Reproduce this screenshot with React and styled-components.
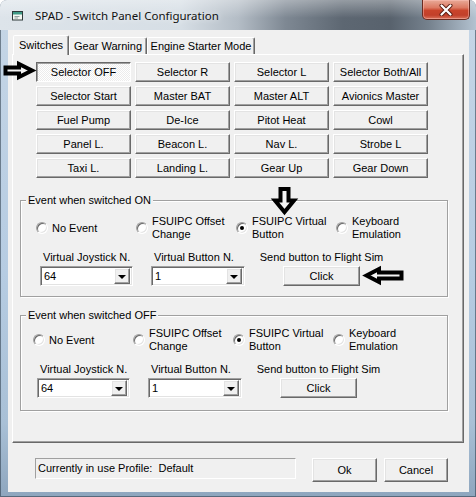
import React from "react";
import styled, { createGlobalStyle, css } from "styled-components";

const Global = createGlobalStyle`
  * { box-sizing: border-box; }
  body { margin: 0; background: #fff; font-family: "Liberation Sans", Arial, sans-serif; font-size: 11px; color: #000; }
`;

const raised = css`
  background: #f0f0f0;
  border: 1px solid;
  border-color: #fff #696969 #696969 #fff;
  box-shadow: inset -1px -1px 0 #a0a0a0, inset 1px 1px 0 #e3e3e3;
`;

const sunken = css`
  border: 1px solid;
  border-color: #a0a0a0 #fff #fff #a0a0a0;
  box-shadow: inset 1px 1px 0 #696969, inset -1px -1px 0 #e3e3e3;
`;

const Window = styled.div`
  position: relative;
  width: 476px;
  height: 497px;
  display: flex;
  flex-direction: column;
  overflow: hidden;
  border-radius: 7px 7px 0 0;
  background: linear-gradient(180deg, #c6d6e6 0%, #b6cce2 55%, #a9c0d6 85%, #8ea6be 100%);
  box-shadow: inset 0 0 0 1px rgba(40, 55, 70, 0.55);
`;

const TitleBar = styled.div`
  height: 30px;
  flex: none;
  display: flex;
  align-items: center;
  padding-left: 12px;
  gap: 12px;
  background:
    linear-gradient(180deg, rgba(255,255,255,0.35) 0%, rgba(255,255,255,0) 60%),
    linear-gradient(90deg, #dde4ea 0%, #d6dee5 38%, #b4bdc6 50%, #7e8893 60%, #5d6772 72%, #58626d 82%, #75818d 90%, #b3c2d0 100%);
`;

const TitleText = styled.span`
  font-family: "Noto Sans", "Open Sans", sans-serif;
  font-size: 11.5px;
  color: #111;
  text-shadow: 0 0 6px rgba(255, 255, 255, 0.9);
`;

const CloseButton = styled.div`
  margin-left: auto;
  margin-right: 6px;
  align-self: flex-start;
  width: 48px;
  height: 20px;
  border: 1px solid #6b2b20;
  border-top: none;
  border-radius: 0 0 5px 5px;
  background: linear-gradient(180deg, #e9aa98 0%, #dc7a63 40%, #c9442b 55%, #c2402a 80%, #d9735c 100%);
  box-shadow: inset 0 0 0 1px rgba(255, 200, 190, 0.45);
  display: flex;
  align-items: center;
  justify-content: center;
`;

const Client = styled.div`
  flex: 1;
  margin: 0 7px 5px 8px;
  background: #f0f0f0;
  padding: 5px 0 0 4px;
  display: flex;
  flex-direction: column;
`;

const TabStrip = styled.div`
  position: relative;
  z-index: 1;
  display: flex;
  align-items: flex-end;
  height: 19px;
  margin-left: 1px;
`;

const Tab = styled.div`
  width: ${(p) => p.$w}px;
  height: ${(p) => (p.$active ? 20 : 17)}px;
  margin-bottom: ${(p) => (p.$active ? -1 : 0)}px;
  padding-bottom: ${(p) => (p.$active ? 2 : 0)}px;
  background: #f0f0f0;
  border: 1px solid;
  border-bottom: none;
  border-color: #fff #696969 transparent #fff;
  box-shadow: inset -1px 0 0 #a0a0a0;
  border-radius: 2px 2px 0 0;
  display: flex;
  align-items: center;
  justify-content: center;
  white-space: nowrap;
`;

const Panel = styled.div`
  width: 452px;
  height: 389px;
  border: 1px solid;
  border-color: #fff #696969 #696969 #fff;
  box-shadow: inset -1px -1px 0 #a0a0a0;
  padding-top: 7px;
  display: flex;
  flex-direction: column;
`;

const SwitchGrid = styled.div`
  margin-left: 23px;
  display: grid;
  grid-template-columns: repeat(4, 95px);
  grid-auto-rows: 20px;
  column-gap: 4px;
  row-gap: 4px;
`;

const Button = styled.button`
  ${raised}
  width: ${(p) => (p.$w ? `${p.$w}px` : "100%")};
  height: ${(p) => p.$h || 20}px;
  padding: 0;
  margin: 0;
  font: 11px "Liberation Sans", Arial, sans-serif;
  color: #000;
  display: flex;
  align-items: center;
  justify-content: center;
  white-space: nowrap;
  ${(p) =>
    p.$pressed &&
    css`
      border-color: #696969 #fff #fff #696969;
      box-shadow: inset 1px 1px 0 #a0a0a0;
      background: repeating-conic-gradient(#ffffff 0 25%, #ececec 0 50%) 0 0 / 2px 2px;
    `}
`;

const Group = styled.div`
  position: relative;
  width: 428px;
  height: ${(p) => p.$h}px;
  margin: ${(p) => p.$mt}px 0 0 7px;
  border: 1px solid #a0a0a0;
  box-shadow: 1px 1px 0 #fff, inset 1px 1px 0 #fff;
  padding: ${(p) => p.$pt}px 0 0 ${(p) => p.$pl}px;
`;

const Legend = styled.span`
  position: absolute;
  top: -7px;
  left: 5px;
  padding: 0 2px;
  line-height: 13px;
  background: #f0f0f0;
  white-space: nowrap;
`;

const RadioRow = styled.div`
  display: grid;
  grid-template-columns: repeat(4, 100px);
  align-items: center;
  height: 26px;
`;

const RadioItem = styled.label`
  display: flex;
  align-items: center;
  gap: 4px;
  line-height: 13px;
`;

const RadioDot = styled.span`
  position: relative;
  flex: none;
  width: 12px;
  height: 12px;
  border-radius: 50%;
  background: #fff;
  border: 1px solid;
  border-color: #a0a0a0 #fff #fff #a0a0a0;
  box-shadow: inset 1px 1px 0 #696969, inset -1px -1px 0 #e3e3e3;
  ${(p) =>
    p.$checked &&
    css`
      &::after {
        content: "";
        position: absolute;
        left: 3px;
        top: 3px;
        width: 4px;
        height: 4px;
        border-radius: 50%;
        background: #000;
      }
    `}
`;

const LowerRow = styled.div`
  display: flex;
  gap: 18px;
  margin: 10px 0 0 4px;
`;

const Field = styled.div`
  display: flex;
  flex-direction: column;
  gap: 2px;
`;

const SendField = styled(Field)`
  width: 117px;
  align-items: center;
`;

const FieldLabel = styled.span`
  line-height: 13px;
  padding-left: ${(p) => (p.$center ? 0 : 3)}px;
  white-space: nowrap;
`;

const SelectBox = styled.div`
  ${sunken}
  width: ${(p) => p.$w}px;
  height: 20px;
  background: #fff;
  display: flex;
  align-items: center;
  justify-content: space-between;
  padding: 0 2px 0 3px;
`;

const DropButton = styled.span`
  ${raised}
  width: 16px;
  height: 16px;
  display: flex;
  align-items: center;
  justify-content: center;
  &::after {
    content: "";
    border-left: 4px solid transparent;
    border-right: 4px solid transparent;
    border-top: 4px solid #000;
    margin-top: 1px;
  }
`;

const BottomRow = styled.div`
  display: flex;
  align-items: flex-start;
  margin: 15px 0 0 23px;
`;

const StatusBox = styled.div`
  width: 261px;
  height: 21px;
  border: 1px solid;
  border-color: #a0a0a0 #fff #fff #a0a0a0;
  padding: 3px 0 0 2px;
  line-height: 13px;
  margin-right: 16px;
  white-space: pre;
`;

const DialogButtons = styled.div`
  display: flex;
  gap: 7px;
`;

const Overlay = styled.svg`
  position: absolute;
  left: 0;
  top: 0;
  pointer-events: none;
`;

const switches = [
  "Selector OFF", "Selector R", "Selector L", "Selector Both/All",
  "Selector Start", "Master BAT", "Master ALT", "Avionics Master",
  "Fuel Pump", "De-Ice", "Pitot Heat", "Cowl",
  "Panel L.", "Beacon L.", "Nav L.", "Strobe L",
  "Taxi L.", "Landing L.", "Gear Up", "Gear Down",
];

const radios = [
  ["No Event"],
  ["FSUIPC Offset", "Change"],
  ["FSUIPC Virtual", "Button"],
  ["Keyboard", "Emulation"],
];

function EventGroup({ title, h, mt, pt, pl }) {
  return (
    <Group $h={h} $mt={mt} $pt={pt} $pl={pl}>
      <Legend>{title}</Legend>
      <RadioRow>
        {radios.map((lines, i) => (
          <RadioItem key={i}>
            <RadioDot $checked={i === 2} />
            <span>
              {lines.map((l, j) => (
                <React.Fragment key={j}>
                  {j > 0 && <br />}
                  {l}
                </React.Fragment>
              ))}
            </span>
          </RadioItem>
        ))}
      </RadioRow>
      <LowerRow>
        <Field>
          <FieldLabel>Virtual Joystick N.</FieldLabel>
          <SelectBox $w={93}>
            <span>64</span>
            <DropButton />
          </SelectBox>
        </Field>
        <Field>
          <FieldLabel>Virtual Button N.</FieldLabel>
          <SelectBox $w={94}>
            <span>1</span>
            <DropButton />
          </SelectBox>
        </Field>
        <SendField>
          <FieldLabel $center>Send button to Flight Sim</FieldLabel>
          <Button $w={77}>Click</Button>
        </SendField>
      </LowerRow>
    </Group>
  );
}

export default function App() {
  return (
    <>
      <Global />
      <Window>
        <TitleBar>
          <svg width="11" height="11" viewBox="0 0 11 11">
            <rect x="0.5" y="1.5" width="10" height="8.5" fill="#f4f7f2" stroke="#2f3a3a" />
            <rect x="1" y="2" width="9" height="2.5" fill="#3f9a86" />
            <path d="M2.5 6.5h5M2.5 8h3.5" stroke="#7a8a8a" strokeWidth="0.8" />
          </svg>
          <TitleText>SPAD - Switch Panel Configuration</TitleText>
          <CloseButton>
            <svg width="16" height="12" viewBox="0 0 16 12">
              <path d="M3.5 1.5L12.5 10.5M12.5 1.5L3.5 10.5" stroke="#5a1d12" strokeWidth="4" strokeLinecap="round" />
              <path d="M3.5 1.5L12.5 10.5M12.5 1.5L3.5 10.5" stroke="#fff" strokeWidth="2.2" strokeLinecap="round" />
            </svg>
          </CloseButton>
        </TitleBar>
        <Client>
          <TabStrip>
            <Tab $w={56} $active>Switches</Tab>
            <Tab $w={78}>Gear Warning</Tab>
            <Tab $w={108}>Engine Starter Mode</Tab>
          </TabStrip>
          <Panel>
            <SwitchGrid>
              {switches.map((s, i) => (
                <Button key={s} $pressed={i === 0}>{s}</Button>
              ))}
            </SwitchGrid>
            <EventGroup title="Event when switched ON" h={97} mt={22} pt={14} pl={15} />
            <EventGroup title="Event when switched OFF" h={96} mt={18} pt={11} pl={12} />
          </Panel>
          <BottomRow>
            <StatusBox>Currently in use Profile:  Default</StatusBox>
            <DialogButtons>
              <Button $w={65} $h={24}>Ok</Button>
              <Button $w={64} $h={24}>Cancel</Button>
            </DialogButtons>
          </BottomRow>
        </Client>
        <Overlay width="476" height="497" viewBox="0 0 476 497">
          <g fill="#f4f4f4" stroke="#000" strokeWidth="4" strokeLinejoin="miter">
            <polygon points="5.5,67.5 19,67.5 19,64 32,70.5 19,77 19,73.5 5.5,73.5" />
            <polygon points="280.5,189 288.5,189 288.5,200.5 294,200.5 284.5,212 275,200.5 280.5,200.5" />
            <polygon points="366.5,275.5 379,269 379,272.5 401.5,272.5 401.5,278.5 379,278.5 379,282" />
          </g>
        </Overlay>
      </Window>
    </>
  );
}
